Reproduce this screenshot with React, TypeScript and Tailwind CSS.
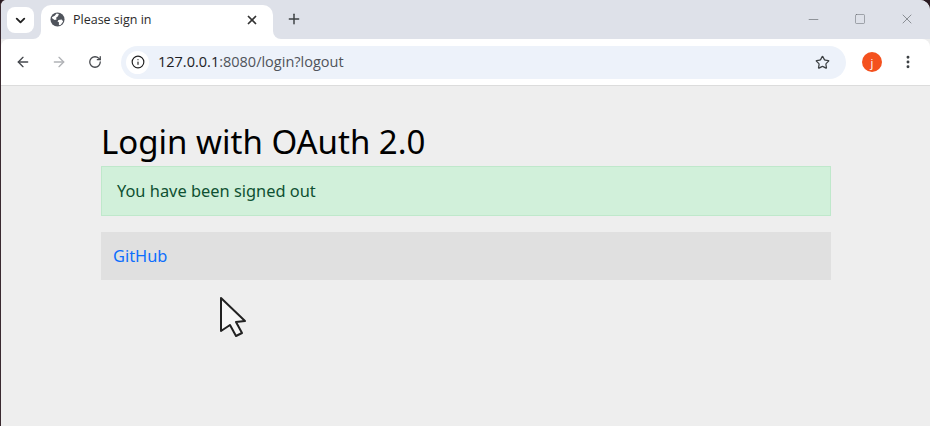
import { ArrowLeft, ArrowRight, ChevronDown, Info, Minus, MoreVertical, Plus, RotateCw, Square, Star, X } from "lucide-react";

function GlobeIcon() {
  return (
    <svg width="15" height="15" viewBox="0 0 16 16" className="shrink-0">
      <circle cx="8" cy="8" r="7.5" fill="#50545c" />
      <path d="M2 5.5 L5 4 L7 1.5 L9.5 2 L8.5 4.5 L6.5 6 L7 8 L5 8.5 L2.5 7 Z" fill="#ffffff" />
      <path d="M9 8.5 L12.5 8 L14 10 L11.5 13.5 L9.5 14 L9.5 11 L8 10 Z" fill="#ffffff" />
    </svg>
  );
}

export default function App() {
  return (
    <div className="w-[930px] h-[426px] flex flex-col overflow-hidden bg-[#2b1b22]">
      <div className="flex-1 flex flex-col border-l border-[#3a2a30] rounded-tl-[6px] rounded-tr-[10px] overflow-hidden bg-[#eeeeee] font-['Noto_Sans',sans-serif]">
        {/* tab strip */}
        <div className="h-[39px] shrink-0 flex items-end bg-[#dee1e9]">
          <div className="w-[27px] h-[26px] ml-[6px] mb-[6px] rounded-[8px] bg-white flex items-center justify-center">
            <ChevronDown size={15} strokeWidth={3} className="text-[#222]" />
          </div>
          <div className="w-[232px] h-[34px] ml-[7px] relative rounded-t-[10px] bg-white flex items-center pl-[9px] pr-[14px] pb-[5px]">
            <GlobeIcon />
            <span className="ml-[8px] pt-[1px] text-[12.5px] text-[#2a2a2a] font-['Open_Sans',sans-serif]">Please sign in</span>
            <X size={14} strokeWidth={3} className="ml-auto text-[#333]" />
            {/* curved feet of the active tab */}
            <div className="absolute left-[-8px] bottom-0 w-[8px] h-[8px] bg-white">
              <div className="w-full h-full bg-[#dee1e9] rounded-br-[8px]" />
            </div>
            <div className="absolute right-[-8px] bottom-0 w-[8px] h-[8px] bg-white">
              <div className="w-full h-full bg-[#dee1e9] rounded-bl-[8px]" />
            </div>
          </div>
          <Plus size={16} strokeWidth={2.2} className="ml-[13px] mb-[12px] text-[#3c4043]" />
          <div className="ml-auto flex items-center mb-[12px] mr-[15px] gap-[33px] text-[#5f6368]">
            <Minus size={15} strokeWidth={1} />
            <Square size={12} strokeWidth={1} />
            <X size={16} strokeWidth={1} />
          </div>
        </div>

        {/* toolbar */}
        <div className="h-[47px] shrink-0 flex items-center bg-white rounded-t-[8px] border-b border-[#dcdcdc]">
          <ArrowLeft size={16} strokeWidth={2} className="ml-[14px] text-[#45484d]" />
          <ArrowRight size={16} strokeWidth={2} className="ml-[20px] text-[#b0b2b6]" />
          <RotateCw size={14} strokeWidth={2.2} className="ml-[21px] text-[#45484d]" />
          <div className="w-[725px] h-[33px] ml-[19px] rounded-full bg-[#edf2fa] flex items-center pl-[5px] pr-[16px]">
            <div className="w-[23px] h-[23px] rounded-full bg-white flex items-center justify-center">
              <Info size={14} strokeWidth={2} className="text-[#222]" />
            </div>
            <span className="ml-[9px] text-[14.5px] text-[#202124] font-['Open_Sans',sans-serif]">
              127.0.0.1<span className="text-[#50545a]">:8080/login?logout</span>
            </span>
            <Star size={15} strokeWidth={2} className="ml-auto text-[#3c4043]" />
          </div>
          <div className="w-[20px] h-[20px] ml-[16px] rounded-full bg-[#f4511e] flex items-center justify-center text-white text-[11px] leading-none">j</div>
          <MoreVertical size={16} strokeWidth={2.4} className="ml-[18px] text-[#3c4043]" />
        </div>

        {/* page */}
        <div className="flex-1 pl-[100px] pr-[99px] relative">
          <h1 className="mt-[34px] text-[33px] leading-[44px] text-black">Login with OAuth 2.0</h1>
          <div className="mt-[2px] h-[50px] flex items-center pl-[15px] bg-[#d1f0da] border border-[#bfe8cb] text-[16.4px] text-[#0f5132]">
            You have been signed out
          </div>
          <div className="mt-[16px] h-[48px] flex items-center pl-[12px] bg-[#e0e0e0] text-[16.4px] text-[#0d6efd]">GitHub</div>
          <svg className="absolute left-[217px] top-[210px]" width="30" height="42" viewBox="0 0 30 42">
            <path d="M3 2 L27 25 L18 26 L24 37 L18 40 L12 29 L3 35 Z" fill="#f6f6f6" stroke="#222" strokeWidth="2" strokeLinejoin="round" />
          </svg>
        </div>
      </div>
    </div>
  );
}
